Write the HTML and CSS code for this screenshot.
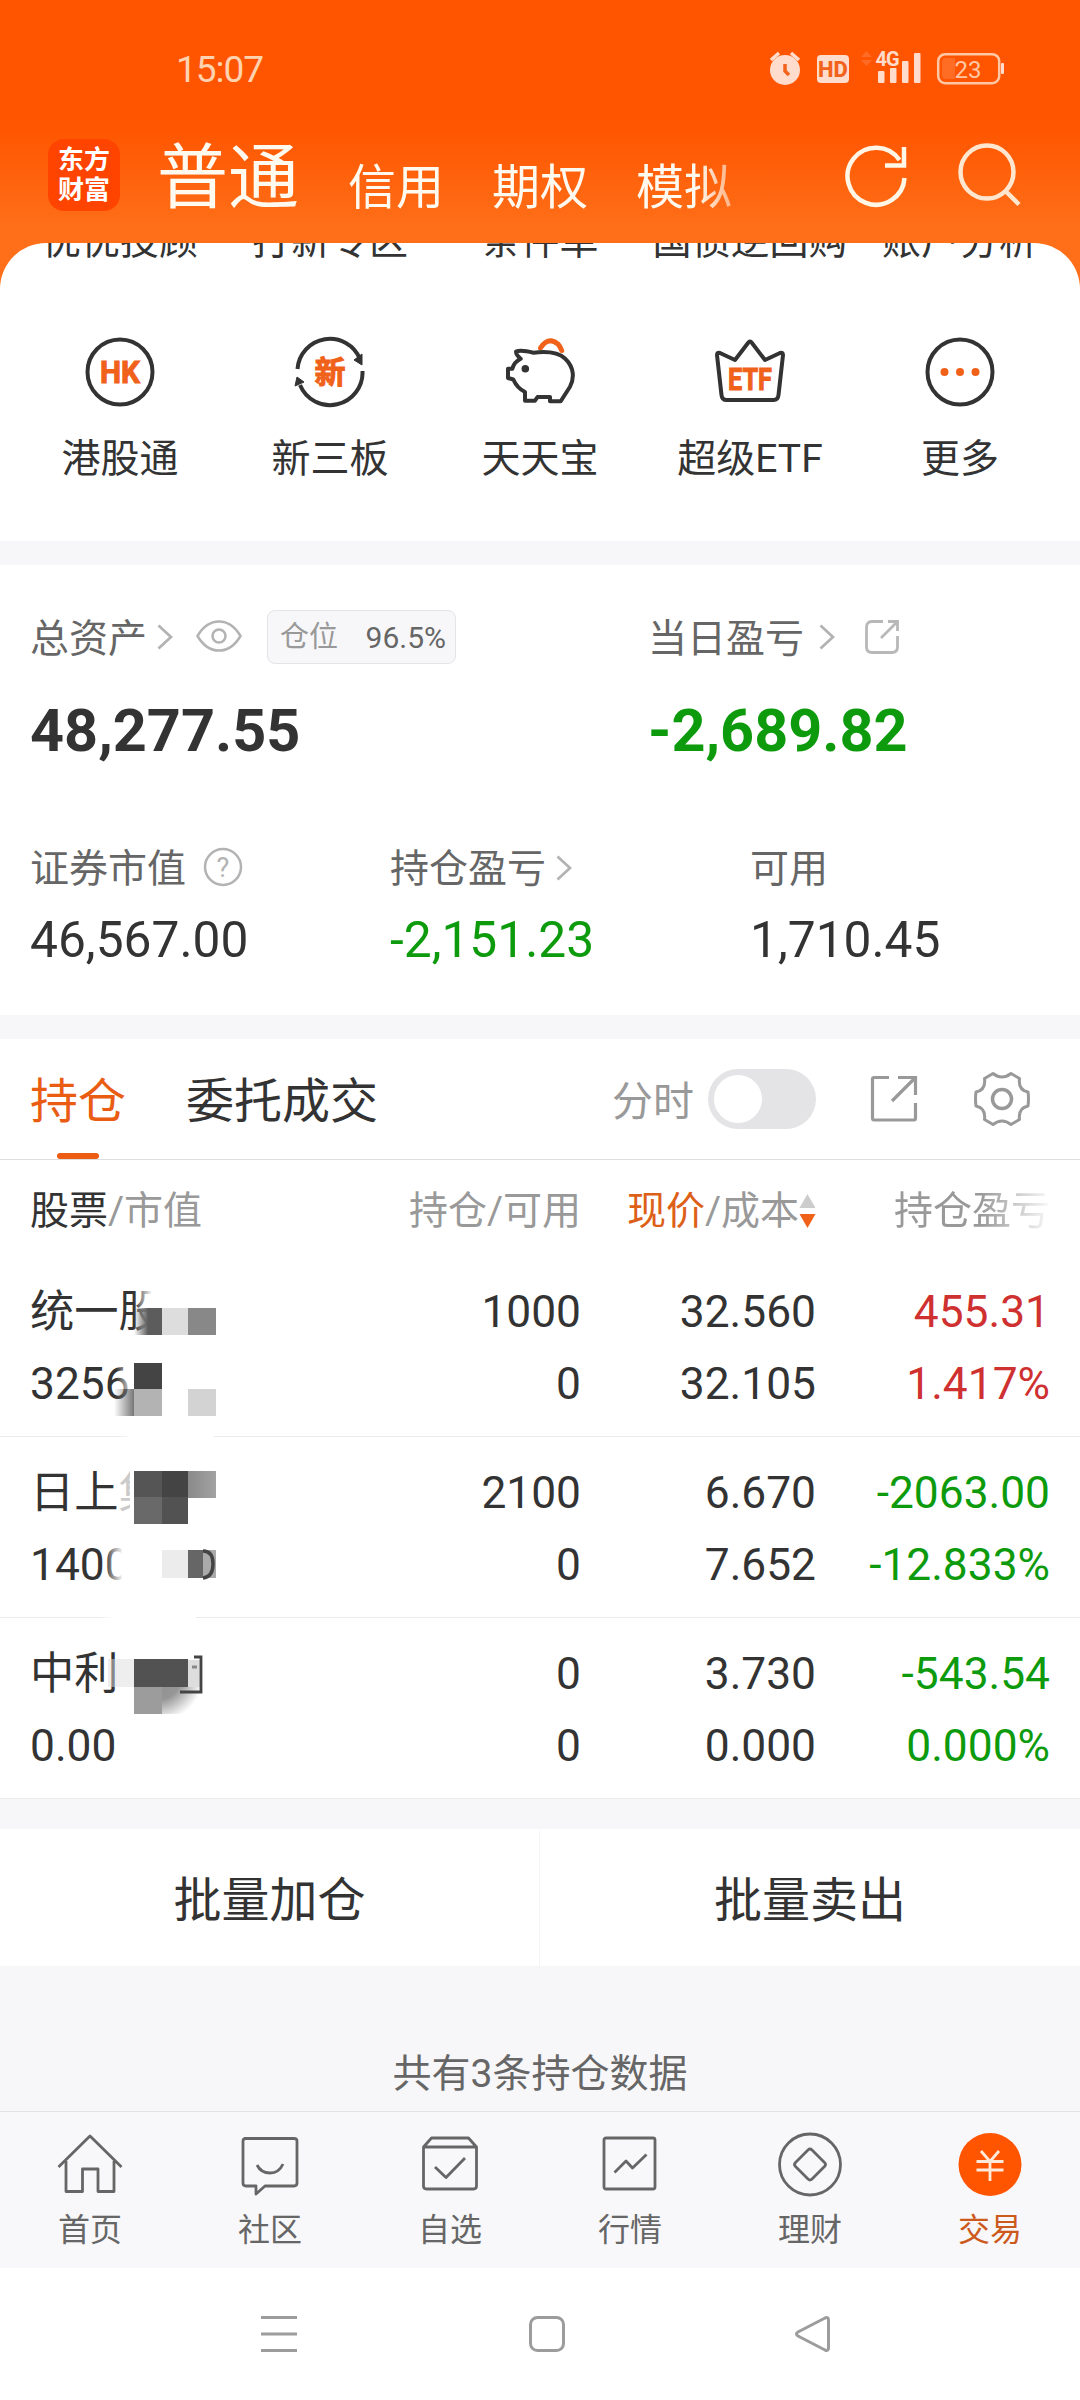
FILE: index.html
```html
<!DOCTYPE html>
<html lang="zh">
<head>
    <meta charset="UTF-8">
    <meta name="viewport" content="width=device-width, initial-scale=1.0">
    <title>交易</title>
    <link rel="stylesheet" href="styles.css">
</head>
<body>

    <!-- 顶部 -->
    <header class="header">
        <div class="status-bar">
            <span class="time">15:07</span>
            <svg class="status-icons" width="238" height="38" viewBox="769 50 238 38">
                <g fill="#ffdccb">
                    <circle cx="785" cy="70" r="15"/>
                    <path d="M771 60l8-7M799 60l-8-7" stroke="#ffdccb" stroke-width="3.5"/>
                    <rect x="817" y="55" width="32" height="28" rx="4"/>
                    <rect x="878" y="71" width="6.500" height="12" rx="1"/>
                    <rect x="890" y="68" width="6.500" height="15" rx="1"/>
                    <rect x="902" y="61" width="6.500" height="22" rx="1"/>
                    <rect x="914" y="53" width="6.500" height="30" rx="1"/>
                    <rect x="1001" y="63" width="3" height="11" rx="1"/>
                </g>
                <path d="M785 64v7l4 4" fill="none" stroke="#f2621a" stroke-width="3.500"/>
                <text x="833" y="77" class="hd">HD</text>
                <path d="M861 57l5.500-6 5.500 6zM861 60l5.500 6 5.500-6z" fill="#ff6b25"/>
                <text x="887" y="66" class="net">4G</text>
                <rect x="938.200" y="54.200" width="61" height="29" rx="7" fill="none" stroke="#ffc7a3" stroke-width="2.500"/>
                <path d="M946 58h9v21h-9q-4 0-4-4V62q0-4 4-4z" fill="#ff6c24"/>
                <text x="968" y="78" class="battery">23</text>
            </svg>
        </div>
        <div class="title-bar">
            <div class="logo"><span>东方</span><span>财富</span></div>
            <nav class="account-tabs">
                <a class="current">普通</a>
                <a>信用</a>
                <a>期权</a>
                <a>模拟</a>
            </nav>
            <svg class="refresh" width="64" height="64" viewBox="0 0 64 64" fill="none" stroke="#fff6e6" stroke-width="4.500">
                <path d="M60.500 34A28.500 28.500 0 1 1 55.500 16"/>
                <path d="M60 3v18.500H41"/>
            </svg>
            <svg class="search" width="64" height="64" viewBox="0 0 64 64" fill="none" stroke="#ffe6cf" stroke-width="4.500">
                <circle cx="30" cy="29" r="26.500"/>
                <path d="M48 47.500L62 61.500"/>
            </svg>
        </div>
    </header>

    <!-- 功能入口 -->
    <section class="sheet">
        <div class="grid first">
            <span>优优投顾</span>
            <span>打新专区</span>
            <span>条件单</span>
            <span>国债逆回购</span>
            <span>账户分析</span>
        </div>
        <div class="grid">
            <div class="entry">
                <svg width="72" height="72" viewBox="0 0 72 72">
                    <circle cx="36" cy="36" r="32.500" class="line"/>
                    <text x="36" y="46.500" class="hk" textLength="40" lengthAdjust="spacingAndGlyphs">HK</text>
                </svg>
                <span>港股通</span>
            </div>
            <div class="entry">
                <svg width="72" height="72" viewBox="0 0 72 72">
                    <path d="M3.500 33A32.500 32.500 0 0 1 66 23" class="line"/>
                    <path d="M68.500 35A32.500 32.500 0 0 1 6 49" class="line"/>
                    <path d="M60 24l8-6v11zM3 41L1 50 10 46z" fill="#333" stroke="#333"/>
                    <text x="36" y="47" class="xin">新</text>
                </svg>
                <span>新三板</span>
            </div>
            <div class="entry">
                <svg width="72" height="72" viewBox="0 0 72 72">
                    <path d="M36.500 12Q41 4.500 47 4.700 55 6 57.700 14.500" fill="none" stroke="#f0611a" stroke-width="5" stroke-linecap="round"/>
                    <path d="M12 15.500Q17 13.500 29.500 16.700C44 15 54 16 61 22.500 71 32 70 43 66 50.700L56.700 65.300H46V61H33.500L31 64.700H21V56Q13 52 9.300 43.500L4 42V32.700H8.300Q10 26 16.700 22.700 12 19 12 15.500z" class="line"/>
                    <circle cx="21.300" cy="32.700" r="3.800" fill="#333"/>
                </svg>
                <span>天天宝</span>
            </div>
            <div class="entry">
                <svg width="72" height="72" viewBox="0 0 72 72">
                    <path d="M3 19Q3 16 6 17L21 24 34 7Q36 4 38 7L51 24 66 17Q69 16 69 19L64.500 59Q64 64 59.500 64H12.500Q8 64 7.500 59z" class="line"/>
                    <text x="36" y="53.500" class="etf" textLength="44" lengthAdjust="spacingAndGlyphs">ETF</text>
                </svg>
                <span>超级ETF</span>
            </div>
            <div class="entry">
                <svg width="72" height="72" viewBox="0 0 72 72">
                    <circle cx="36" cy="36" r="32.500" class="line"/>
                    <g fill="#f0611a">
                        <circle cx="20.500" cy="36" r="4"/>
                        <circle cx="36" cy="36" r="4"/>
                        <circle cx="51.500" cy="36" r="4"/>
                    </g>
                </svg>
                <span>更多</span>
            </div>
        </div>
    </section>

    <!-- 资产 -->
    <section class="assets">
        <div class="assets-top">
            <div>
                <div class="label-row">
                    <span class="label">总资产</span>
                    <svg class="chevron total" width="16" height="26" viewBox="0 0 16 26"><path d="M1.500 1.500L14 13 1.500 24.500"/></svg>
                    <svg class="eye" width="46" height="32" viewBox="0 0 46 32" fill="none" stroke="#b3b3b3" stroke-width="2.500">
                        <path d="M1.500 16Q10 1.500 23 1.500T44.500 16Q36 30.500 23 30.500T1.500 16z"/>
                        <circle cx="23" cy="16" r="6.500"/>
                    </svg>
                    <div class="position"><span>仓位</span><b>96.5%</b></div>
                </div>
                <div class="big">48,277.55</div>
            </div>
            <div>
                <div class="label-row">
                    <span class="label">当日盈亏</span>
                    <svg class="chevron today" width="16" height="26" viewBox="0 0 16 26"><path d="M1.500 1.500L14 13 1.500 24.500"/></svg>
                    <svg class="share-small" width="34" height="34" viewBox="0 0 34 34" fill="none" stroke="#b8b8b8" stroke-width="2.800">
                        <path d="M18 1.500H7Q1.500 1.500 1.500 7V27Q1.500 32.500 7 32.500H27Q32.500 32.500 32.500 27V16"/>
                        <path d="M23 1.500H32.500V11M32 2L16 18"/>
                    </svg>
                </div>
                <div class="big green">-2,689.82</div>
            </div>
        </div>
        <div class="assets-bottom">
            <div>
                <div class="sub-label">证券市值
                    <svg class="help" width="40" height="40" viewBox="0 0 40 40">
                        <circle cx="20" cy="20" r="18" fill="none" stroke="#b3b3b3" stroke-width="2.500"/>
                        <text x="20" y="29.500">?</text>
                    </svg>
                </div>
                <div class="value">46,567.00</div>
            </div>
            <div>
                <div class="sub-label">持仓盈亏
                    <svg class="chevron hold" width="16" height="26" viewBox="0 0 16 26"><path d="M1.500 1.500L14 13 1.500 24.500"/></svg>
                </div>
                <div class="value green">-2,151.23</div>
            </div>
            <div>
                <div class="sub-label">可用</div>
                <div class="value">1,710.45</div>
            </div>
        </div>
    </section>

    <!-- 持仓列表 -->
    <section class="holdings">
        <div class="tabs">
            <a class="tab active">持仓</a>
            <a class="tab">委托成交</a>
            <span class="minute">分时</span>
            <span class="switch"></span>
            <svg class="share" width="48" height="48" viewBox="0 0 48 48" fill="none" stroke="#999" stroke-width="3.200">
                <path d="M19 2.500H4Q2.500 2.500 2.500 4V43Q2.500 45 4 45H44Q45.500 45 45.500 43V28"/>
                <path d="M28 2.500H45.500V20M45 3L22 26"/>
            </svg>
            <svg class="gear" width="56" height="56" viewBox="0 0 56 56" fill="none" stroke="#999" stroke-width="3">
                <path d="M19 2.500Q28 9.500 37 2.500L45.500 7.500Q44 19 54 21Q55 28 54 35Q44 37 45.500 48.500L37 53.500Q28 46.500 19 53.500L10.500 48.500Q12 37 2 35Q1 28 2 21Q12 19 10.500 7.500z" stroke-linejoin="round"/>
                <circle cx="28" cy="28" r="9.500" stroke-width="3.500"/>
            </svg>
        </div>
        <div class="row head">
            <div class="name"><b>股票</b>/市值</div>
            <div>持仓/可用</div>
            <div class="sorted"><i>现价</i>/成本<svg width="17" height="36" viewBox="0 0 17 36"><path d="M8.500 1L16.500 15H.5z" fill="#ccc"/><path d="M8.500 35L16.500 21H.5z" fill="#f0611a"/></svg></div>
            <div class="fade">持仓盈亏</div>
        </div>
        <div class="row">
            <div class="name">统一股<br>3256</div>
            <div>1000<br>0</div>
            <div>32.560<br>32.105</div>
            <div class="red">455.31<br>1.417%</div>
            <!-- 打码 -->
            <svg class="mosaic" width="130" height="182" viewBox="0 0 130 182">
                <defs>
                    <linearGradient id="white"><stop offset="0" stop-color="#fff" stop-opacity="0"/><stop offset="1" stop-color="#fff"/></linearGradient>
                    <linearGradient id="dark"><stop offset="0" stop-color="#777" stop-opacity="0"/><stop offset="1" stop-color="#777"/></linearGradient>
                    <linearGradient id="shade"><stop offset="0" stop-color="#5c5c5c" stop-opacity="0"/><stop offset=".5" stop-color="#5c5c5c"/></linearGradient>
                    <linearGradient id="light"><stop offset="0" stop-color="#8a8a8a"/><stop offset="1" stop-color="#a2a2a2"/></linearGradient>
                </defs>
                <rect x="34" y="25" width="18" height="60" fill="url(#white)"/>
                <rect x="52" y="25" width="20" height="60" fill="#fff"/>
                <rect x="34" y="52" width="28" height="27" fill="url(#shade)"/>
                <rect x="62" y="52" width="26" height="27" fill="#ddd"/>
                <rect x="88" y="52" width="28" height="27" fill="#888"/>
                <rect x="16" y="107" width="18" height="26" fill="url(#white)"/>
                <rect x="34" y="107" width="28" height="27" fill="#444"/>
                <rect x="14" y="133" width="20" height="27" fill="url(#dark)"/>
                <rect x="34" y="133" width="28" height="27" fill="#b3b3b3"/>
                <rect x="88" y="133" width="28" height="27" fill="#d3d3d3"/>
                <rect x="18" y="178" width="14" height="4" fill="url(#white)"/>
                <rect x="32" y="178" width="82" height="4" fill="#fff"/>
            </svg>
        </div>
        <div class="row">
            <div class="name">日上集<br>1400</div>
            <div>2100<br>0</div>
            <div>6.670<br>7.652</div>
            <div class="green">-2063.00<br>-12.833%</div>
            <svg class="mosaic" width="130" height="182" viewBox="0 0 130 182">
                <rect x="17" y="25" width="17" height="60" fill="#fff" opacity=".75"/>
                <rect x="30" y="25" width="35" height="60" fill="#fff"/>
                <rect x="34" y="34" width="28" height="27" fill="#555"/>
                <rect x="62" y="34" width="26" height="27" fill="#444"/>
                <rect x="88" y="34" width="28" height="27" fill="url(#light)"/>
                <rect x="34" y="60" width="28" height="27" fill="#696969"/>
                <rect x="62" y="60" width="26" height="27" fill="#525252"/>
                <rect x="4" y="105" width="19" height="50" fill="url(#white)"/>
                <rect x="22" y="105" width="20" height="50" fill="#fff"/>
                <rect x="62" y="113" width="26" height="28" fill="#ececec"/>
                <rect x="88" y="113" width="28" height="28" fill="#aaa"/>
                <rect x="88" y="113" width="15" height="28" fill="#666"/>
                <path d="M103 114Q113 114 113 127T103 141" fill="none" stroke="#444" stroke-width="3.500"/>
                <rect x="0" y="178" width="12" height="4" fill="url(#white)"/>
                <rect x="12" y="178" width="84" height="4" fill="#fff"/>
            </svg>
        </div>
        <div class="row">
            <div class="name">中利<br>0.00</div>
            <div>0<br>0</div>
            <div>3.730<br>0.000</div>
            <div class="green">-543.54<br>0.000%</div>
            <svg class="mosaic" width="130" height="182" viewBox="0 0 130 182">
                <defs>
                    <radialGradient id="blot" gradientUnits="userSpaceOnUse" cx="56" cy="56" r="48"><stop offset="0" stop-color="#8e8e8e"/><stop offset=".55" stop-color="#969696"/><stop offset="1" stop-color="#969696" stop-opacity="0"/></radialGradient>
                </defs>
                <rect x="8" y="41" width="26" height="28" fill="#ddd" opacity=".5"/>
                <rect x="88" y="42" width="12" height="27" fill="#ddd"/>
                <path d="M92 49h5" stroke="#888" stroke-width="3"/>
                <rect x="34" y="69" width="28" height="27" fill="#9c9c9c"/>
                <rect x="62" y="69" width="42" height="27" fill="url(#blot)"/>
                <rect x="34" y="41" width="54" height="28" fill="#525252"/>
                <path d="M94 39H101V74H80" fill="none" stroke="#444" stroke-width="2.800"/>
            </svg>
        </div>
    </section>

    <div class="batch">
        <a>批量加仓</a>
        <a>批量卖出</a>
    </div>
    <div class="total-tip">共有3条持仓数据</div>

    <!-- 底部导航 -->
    <footer class="tab-bar">
        <a>
            <svg width="68" height="68" viewBox="0 0 68 68">
                <path d="M2.500 35L34 4 65.500 35M10 29V59.500H26.500V37H42V59.500H58V29"/>
            </svg>
            <span>首页</span>
        </a>
        <a>
            <svg width="68" height="68" viewBox="0 0 68 68">
                <path d="M8 6.500H58Q61 6.500 61 9V51Q61 54 58 54H29L20 62V54H10Q7 54 7 51V9Q7 6.500 10 6.500"/>
                <path d="M21 33Q25 41 34 41T47 32"/>
            </svg>
            <span>社区</span>
        </a>
        <a>
            <svg width="68" height="68" viewBox="0 0 68 68">
                <path d="M7.500 15L15.500 6H52.500L60.500 15V54Q60.500 57 57.500 57H10.500Q7.500 57 7.500 54zM7.500 15H60.500M19 35L30 45.500 49 26"/>
            </svg>
            <span>自选</span>
        </a>
        <a>
            <svg width="68" height="68" viewBox="0 0 68 68">
                <rect x="8" y="6" width="51" height="51" rx="2"/>
                <path d="M18.500 40.500L30 29 36.500 36 50.500 22.500"/>
            </svg>
            <span>行情</span>
        </a>
        <a>
            <svg width="68" height="68" viewBox="0 0 68 68">
                <circle cx="34" cy="32.500" r="30.500"/>
                <path d="M36 18L48.500 30.500Q50.500 32.500 48.500 34.500L36 47Q34 49 32 47L19.500 34.500Q17.500 32.500 19.500 30.500L32 18Q34 16 36 18z"/>
            </svg>
            <span>理财</span>
        </a>
        <a class="active">
            <svg width="68" height="68" viewBox="0 0 68 68">
                <circle cx="34" cy="32.500" r="31.500" class="coin"/>
                <path class="yen" d="M25 19L34 29.500 43 19M34 29.500V49M20.500 29.500H47.500M20.500 38H47.500"/>
            </svg>
            <span>交易</span>
        </a>
    </footer>

    <!-- 系统导航键 -->
    <div class="system-bar">
        <svg class="menu" width="36" height="36" viewBox="0 0 36 36"><path d="M0 1.500H36M0 18H36M0 34.500H36"/></svg>
        <svg class="home" width="36" height="36" viewBox="0 0 36 36"><rect x="1.500" y="1.500" width="33" height="33" rx="7"/></svg>
        <svg class="back" width="36" height="36" viewBox="0 0 36 36"><path d="M30 2Q33.500 .5 33.500 4V32Q33.500 35.500 30 34L3 20Q0 18 3 16z"/></svg>
    </div>

</body>
</html>
```
FILE: styles.css
```css
* {
    box-sizing: border-box;
}

body {
    margin: 0;
    width: 1080px;
    height: 2400px;
    overflow: hidden;
    background: #f7f7fa;
    color: #333;
    font-family: Roboto, "Noto Sans CJK SC", sans-serif;
    font-size: 39px;
    font-weight: 400;
}

svg {
    display: block;
    flex: none;
}

/* 顶部 */
.header {
    height: 300px;
    background: linear-gradient(#ff5500 0, #ff5500 125px, #ff6e18 225px, #ff6e18 100%);
    color: #fffaf0;
}

.status-bar {
    display: flex;
    justify-content: space-between;
    height: 139px;
    padding: 0 73px 0 176px;
}

.time {
    font-size: 37px;
    line-height: 140px;
    letter-spacing: -1px;
    color: #ffd2b0;
}

.status-icons {
    margin-top: 50px;
}

.status-icons text {
    font-family: Roboto, sans-serif;
    text-anchor: middle;
}

.status-icons .hd {
    font-size: 22px;
    font-weight: 800;
    fill: #f2621a;
}

.status-icons .net {
    font-size: 20px;
    font-weight: 700;
    letter-spacing: -1px;
    fill: #ffdccb;
}

.status-icons .battery {
    font-size: 24px;
    fill: #ffc7a3;
}

.title-bar {
    display: flex;
    padding-left: 48px;
}

.logo {
    width: 72px;
    height: 72px;
    padding-top: 6px;
    border-radius: 16px;
    background: #ff4400;
    color: #fff;
    font-size: 26px;
    font-weight: 700;
    line-height: 30px;
    text-align: center;
}

.logo span {
    display: block;
}

.account-tabs {
    display: flex;
    gap: 48px;
    width: 640px;
    margin-left: 37px;
    font-size: 48px;
    line-height: 98px;
    -webkit-mask-image: linear-gradient(90deg, #000 540px, transparent 610px);
    mask-image: linear-gradient(90deg, #000 540px, transparent 610px);
}

.account-tabs .current {
    margin-right: 1px;
    font-size: 71px;
    line-height: 77px;
}

.refresh {
    margin: 5px 0 0 47px;
}

.search {
    margin: 4px 0 0 49px;
}

/* 功能入口 */
.sheet {
    position: relative;
    height: 298px;
    margin-top: -57px;
    padding: 0 15px;
    border-radius: 46px 46px 0 0;
    background: #fff;
    overflow: hidden;
}

.grid {
    display: grid;
    grid-template-columns: repeat(5, 1fr);
    text-align: center;
    line-height: 40px;
}

.grid.first {
    margin: -22px 0 75px;
    white-space: nowrap;
}

.entry svg {
    margin: 0 auto 31px;
}

.entry .line {
    fill: none;
    stroke: #333;
    stroke-width: 4;
    stroke-linejoin: round;
}

.entry text {
    fill: #f0611a;
    stroke: #f0611a;
    text-anchor: middle;
    font-size: 31px;
    font-weight: 700;
}

/* 资产 */
.assets {
    height: 450px;
    margin-top: 24px;
    padding: 45px 0 0 30px;
    background: #fff;
}

.assets-top {
    display: grid;
    grid-template-columns: 618px 1fr;
}

.label-row {
    display: flex;
    align-items: center;
    height: 54px;
    color: #666;
}

.label {
    padding-top: 4px;
    line-height: 54px;
}

.chevron {
    fill: none;
    stroke: #b3b3b3;
    stroke-width: 2.8;
}

.chevron.total {
    margin-left: 10px;
}

.chevron.today {
    margin-left: 15px;
}

.chevron.hold {
    margin: -2px 0 0 10px;
}

.eye {
    margin: -3px 25px 0 23px;
}

.position {
    display: flex;
    justify-content: space-between;
    width: 189px;
    height: 54px;
    padding: 0 9px 0 12px;
    border: 1px solid #e4e4e6;
    border-radius: 8px;
    background: #f7f7fa;
    font-size: 29px;
    line-height: 53px;
    color: #999;
}

.position b {
    font-size: 30px;
    font-weight: 400;
    color: #666;
}

.share-small {
    margin-left: 30px;
}

.big {
    margin-top: 37px;
    font-size: 59.4px;
    font-weight: 700;
    line-height: 60px;
}

.assets-bottom {
    display: grid;
    grid-template-columns: repeat(3, 360px);
    margin-top: 86px;
}

.sub-label {
    display: flex;
    align-items: center;
    height: 44px;
    line-height: 44px;
    color: #666;
}

.help {
    margin: -4px 0 0 17px;
}

.help text {
    font-size: 27px;
    text-anchor: middle;
    fill: #b3b3b3;
}

.value {
    margin-top: 24px;
    font-size: 49.7px;
    line-height: 50px;
}

.green {
    color: #0d9b0d;
}

.red {
    color: #cf3030;
}

/* 持仓列表 */
.holdings {
    margin-top: 24px;
    background: #fff;
}

.tabs {
    display: flex;
    align-items: center;
    height: 121px;
    padding-left: 30px;
    border-bottom: 1px solid #dedede;
}

.tab {
    position: relative;
    margin-right: 60px;
    padding-top: 6px;
    font-size: 48px;
    line-height: 114px;
}

.tab.active {
    color: #e95c12;
}

.tab.active::after {
    content: "";
    position: absolute;
    bottom: 0;
    left: 27px;
    width: 42px;
    height: 6px;
    border-radius: 3px;
    background: #ec5c12;
}

.minute {
    margin-left: 174px;
    padding-top: 6px;
    font-size: 41px;
    line-height: 60px;
    color: #999;
}

.switch {
    width: 108px;
    height: 60px;
    margin-left: 14px;
    padding: 6px;
    border-radius: 30px;
    background: #e4e4e6;
}

.switch::before {
    content: "";
    display: block;
    width: 48px;
    height: 48px;
    border-radius: 50%;
    background: #fff;
}

.share {
    margin-left: 54px;
}

.gear {
    margin-left: 56px;
}

.row {
    position: relative;
    display: grid;
    grid-template-columns: 316px 235px 235px 234px;
    height: 181px;
    padding: 20px 0 0 30px;
    border-bottom: 1px solid #ebebed;
    font-size: 44.3px;
    line-height: 72px;
    text-align: right;
}

.row .name {
    text-align: left;
}

.row.head {
    height: 96px;
    padding-top: 7px;
    border: 0;
    font-size: 39px;
    line-height: 89px;
    color: #999;
}

.head b {
    font-weight: 400;
    color: #333;
}

.head i {
    font-style: normal;
    color: #dd5f18;
}

.sorted {
    display: flex;
    align-items: center;
    justify-content: flex-end;
}

.sorted svg {
    margin-top: -2px;
}

.fade {
    -webkit-mask-image: linear-gradient(90deg, #000 165px, transparent 238px);
    mask-image: linear-gradient(90deg, #000 165px, transparent 238px);
}

/* 打码盖在股票名称上面 */
.mosaic {
    position: absolute;
    top: 0;
    left: 100px;
}

/* 批量操作 */
.batch {
    display: grid;
    grid-template-columns: 1fr 1fr;
    height: 137px;
    margin-top: 30px;
    background: #fff;
    font-size: 48px;
    line-height: 144px;
    text-align: center;
}

.batch a:first-child {
    border-right: 1px solid #f5f5f7;
}

.total-tip {
    height: 145px;
    padding-top: 84px;
    line-height: 48px;
    text-align: center;
    color: #666;
}

/* 底部导航 */
.tab-bar {
    display: grid;
    grid-template-columns: repeat(6, 1fr);
    height: 157px;
    padding-top: 20px;
    border-top: 1px solid #e2e2e4;
    background: #f8f8fa;
    font-size: 32px;
    line-height: 36px;
    text-align: center;
    color: #666;
}

.tab-bar svg {
    margin: 0 auto 12px;
    fill: none;
    stroke: #666;
    stroke-width: 2.8;
    stroke-linejoin: round;
}

.tab-bar .active {
    color: #cc5a1c;
}

.tab-bar .coin {
    fill: #ff5500;
    stroke: none;
}

.tab-bar .yen {
    stroke: #ffe9d8;
}

/* 系统导航键 */
.system-bar {
    display: flex;
    height: 132px;
    padding: 48px 0 0 261px;
    background: #fff;
}

.system-bar svg {
    fill: none;
    stroke: #9c9c9c;
    stroke-width: 3;
}

.home {
    margin-left: 232px;
}

.back {
    margin-left: 230px;
}
```
